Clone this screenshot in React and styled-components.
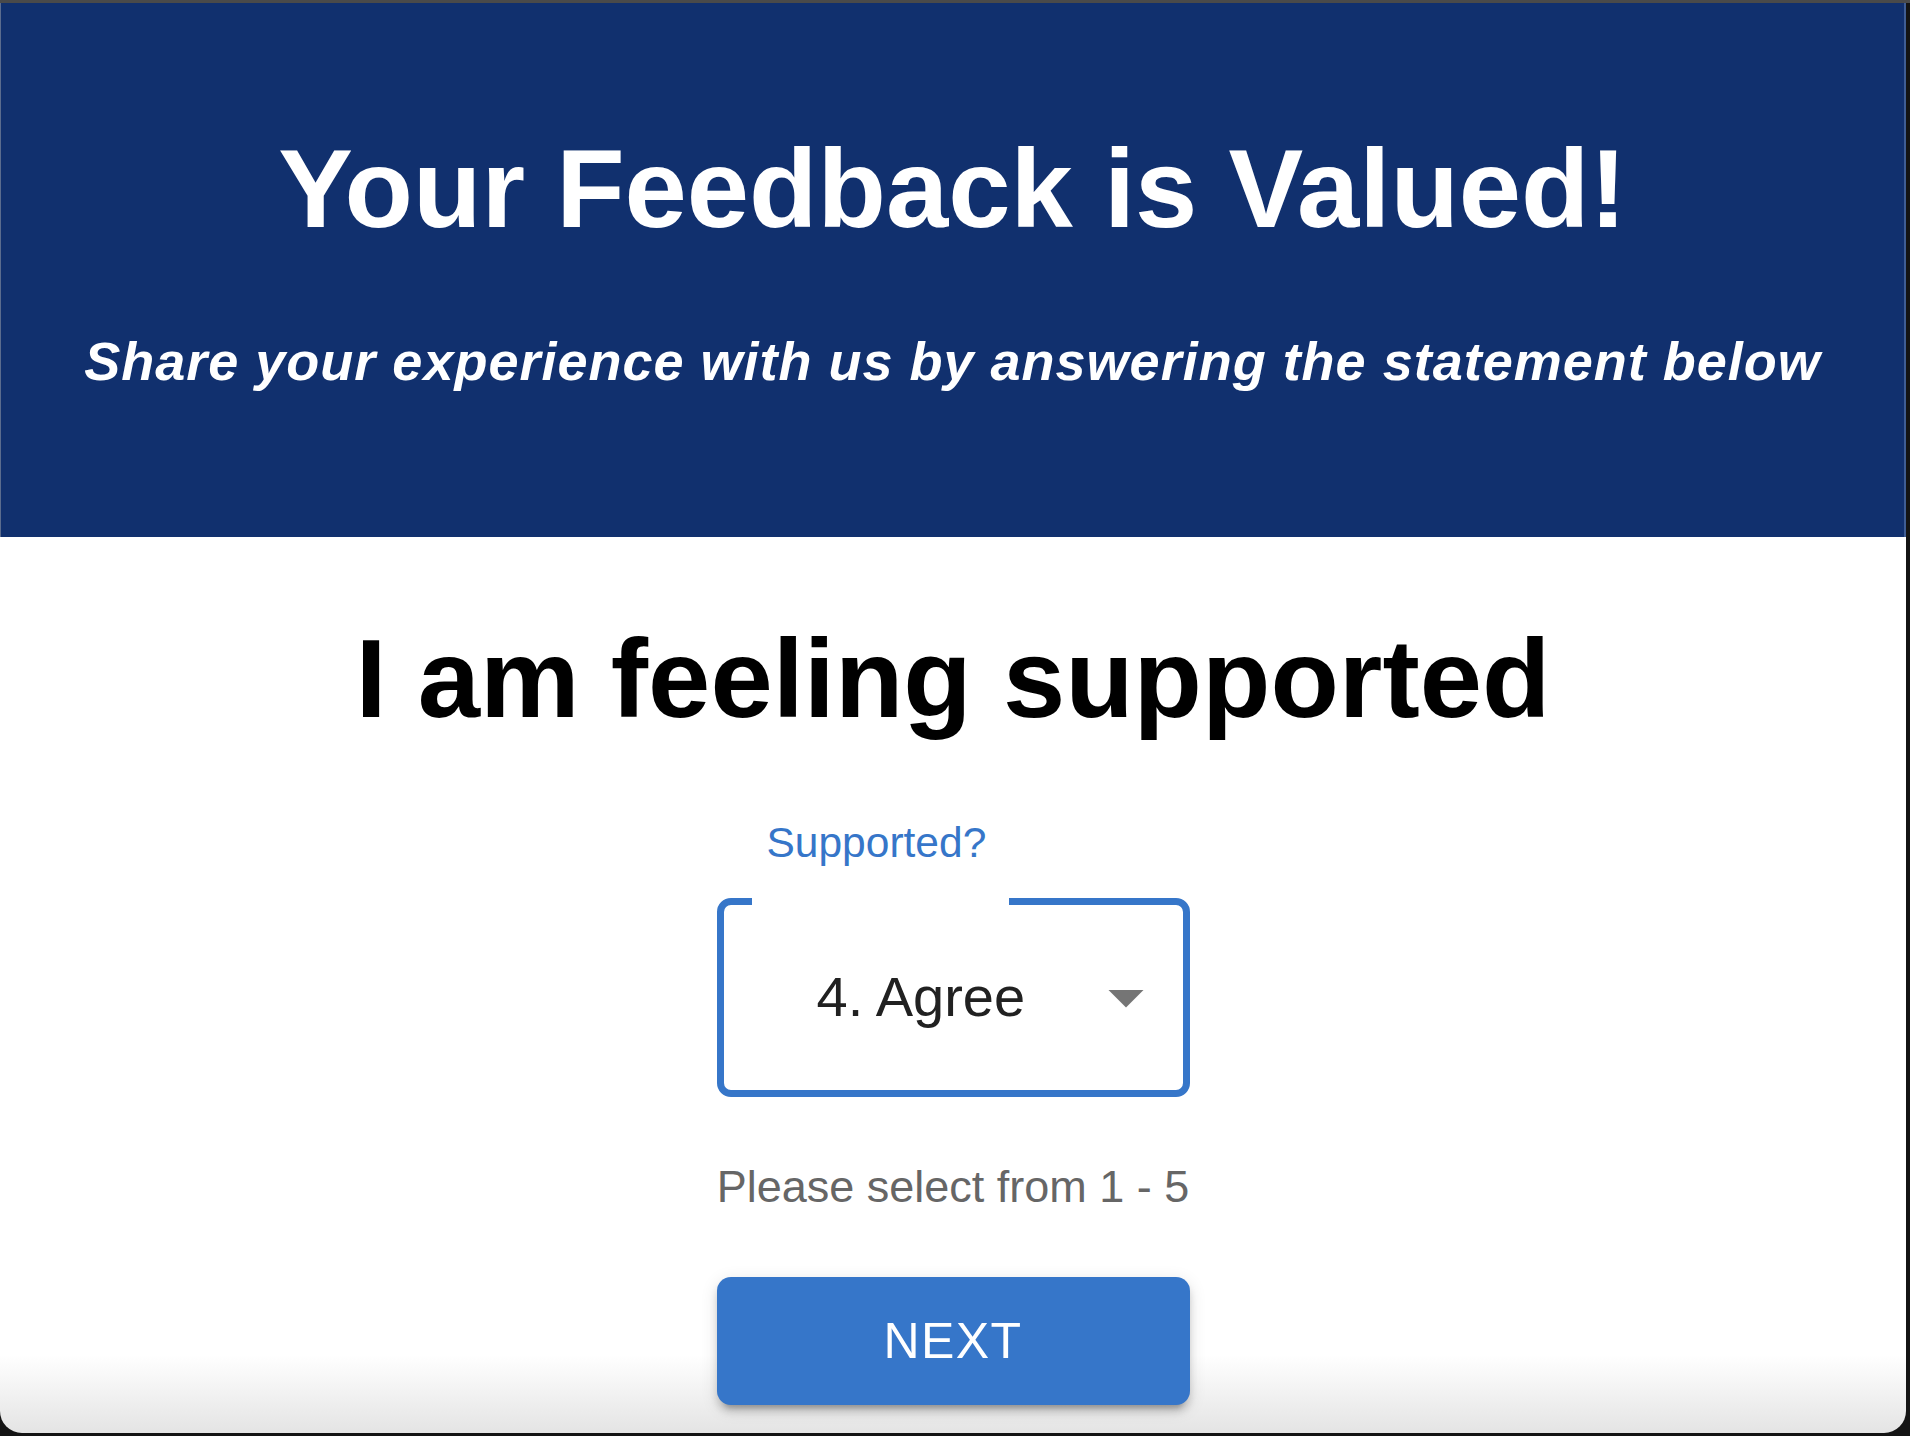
import styled, { createGlobalStyle } from 'styled-components';

const GlobalStyle = createGlobalStyle`
	html, body {
		margin: 0;
		padding: 0;
		background: #141414;
	}

	body {
		font-family: 'Liberation Sans', Arial, Helvetica, sans-serif;
	}
`;

const TopBar = styled.div`
	height: 3px;
	background: #4a4a4a;
`;

const Window = styled.div`
	display: flex;
	flex-direction: column;
	width: 1906px;
	height: 1430px;
	overflow: hidden;
	border-radius: 0 0 22px 22px;
	background: linear-gradient(to bottom, #fff 0, #fff calc(100% - 78px), #e4e4e4 100%);
`;

const Header = styled.header`
	display: flex;
	flex-direction: column;
	align-items: center;
	height: 534px;
	box-sizing: border-box;
	padding-top: 130px;
	background: #11306e;
	color: #fff;
	border-left: 1px solid #5b6c8e;
	border-right: 2px solid #3f5d94;
`;

const Title = styled.h1`
	margin: 0;
	font-size: 112px;
	line-height: 1;
	font-weight: 700;
	white-space: nowrap;
`;

const Subtitle = styled.h2`
	margin: 89px 0 0;
	font-size: 54px;
	line-height: 1;
	font-weight: 700;
	font-style: italic;
	letter-spacing: 1px;
	white-space: nowrap;
`;

const Main = styled.main`
	display: flex;
	flex-direction: column;
	align-items: center;
`;

const Statement = styled.h2`
	margin: 86px 0 0;
	font-size: 112px;
	line-height: 1;
	font-weight: 700;
	color: #000;
	white-space: nowrap;
`;

const Form = styled.div`
	display: flex;
	flex-direction: column;
	width: 473px;
`;

const Label = styled.label`
	margin: 87px 0 0 50px;
	font-size: 42.5px;
	line-height: 1;
	color: #3676c9;
`;

const SelectBox = styled.fieldset`
	box-sizing: border-box;
	height: 199px;
	margin: 33px 0 0;
	padding: 0;
	border: 7px solid #3676c9;
	border-radius: 14px;
	min-inline-size: 0;

	legend {
		width: 257px;
		height: 0;
		margin-left: 28px;
		padding: 0;
	}
`;

const SelectRow = styled.div`
	display: flex;
	align-items: center;
	height: 185px;
	padding: 0 15px 0 93px;
`;

const Value = styled.span`
	flex: 1;
	font-size: 56px;
	line-height: 1;
	color: #212121;
`;

const Helper = styled.p`
	margin: 67px 0 0;
	font-size: 45px;
	line-height: 1;
	text-align: center;
	color: #666;
	white-space: nowrap;
`;

const Button = styled.button`
	height: 128px;
	margin-top: 68px;
	border: none;
	border-radius: 14px;
	background: #3676c9;
	color: #fff;
	font-family: inherit;
	font-size: 50px;
	letter-spacing: 1.4px;
	text-transform: uppercase;
	cursor: pointer;
	box-shadow: 0 10px 4px -7px rgba(0, 0, 0, 0.2), 0 7px 7px 0 rgba(0, 0, 0, 0.14),
		0 4px 17px 0 rgba(0, 0, 0, 0.12);
`;

const ArrowDropDown = () => (
	<svg width="84" height="84" viewBox="0 0 24 24" aria-hidden="true">
		<path d="M7 10l5 5 5-5z" fill="#757575" />
	</svg>
);

export default function App() {
	return (
		<>
			<GlobalStyle />
			<TopBar />
			<Window>
				<Header>
					<Title>Your Feedback is Valued!</Title>
					<Subtitle>Share your experience with us by answering the statement below</Subtitle>
				</Header>
				<Main>
					<Statement>I am feeling supported</Statement>
					<Form>
						<Label>Supported?</Label>
						<SelectBox>
							<legend />
							<SelectRow>
								<Value>4. Agree</Value>
								<ArrowDropDown />
							</SelectRow>
						</SelectBox>
						<Helper>Please select from 1 - 5</Helper>
						<Button>Next</Button>
					</Form>
				</Main>
			</Window>
		</>
	);
}
